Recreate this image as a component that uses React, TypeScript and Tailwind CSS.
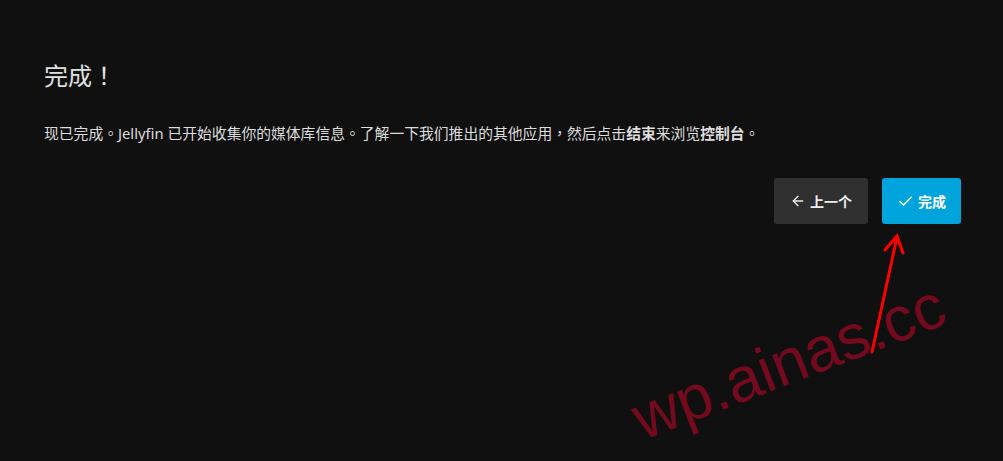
import { ArrowLeft, Check } from "lucide-react";

export default function App() {
  return (
    <div
      className="relative h-[461px] w-full overflow-hidden bg-[#101010] text-[#dddddd]"
      style={{ fontFamily: '"Noto Sans", "Noto Sans CJK TC", sans-serif' }}
    >
      <div className="pl-[43px] pr-[42px] pt-[56px]">
        <h1 className="pl-px text-[24px] font-normal leading-[40px] text-[#e0e0e0]">完成！</h1>
        <p className="mt-[23px] pl-px text-[14.8px] leading-[28px]">
          现已完成。Jellyfin 已开始收集你的媒体库信息。了解一下我们推出的其他应用，然后点击
          <b className="font-bold">结束</b>来浏览<b className="font-bold">控制台</b>。
        </p>

        <div className="mt-[31px] flex justify-end gap-[14px]">
          <button className="flex h-[46px] w-[94px] items-center justify-center gap-1 rounded-[3px] bg-[#303030] text-[14px] font-bold text-[#eeeeee]">
            <ArrowLeft className="size-[16px]" strokeWidth={2} />
            上一个
          </button>
          <button className="flex h-[46px] w-[79px] items-center justify-center gap-1 rounded-[3px] bg-[#00a4dc] text-[14px] font-bold text-white">
            <Check className="size-[17px]" strokeWidth={2} />
            完成
          </button>
        </div>
      </div>

      {/* watermark */}
      <span
        className="pointer-events-none absolute left-[624px] top-[330px] origin-center rotate-[-21deg] whitespace-nowrap text-[63px] leading-none text-[#730a1d]"
        style={{ fontFamily: '"Liberation Sans", Arial, sans-serif' }}
      >
        wp.ainas.cc
      </span>

      {/* annotation arrow */}
      <svg className="pointer-events-none absolute left-0 top-0" width="1003" height="461">
        <g stroke="#ff0000" strokeWidth="3" strokeLinecap="round" fill="none">
          <line x1="872" y1="352" x2="897" y2="237" />
          <polyline points="885,250 897,236 903,253" />
        </g>
      </svg>
    </div>
  );
}
